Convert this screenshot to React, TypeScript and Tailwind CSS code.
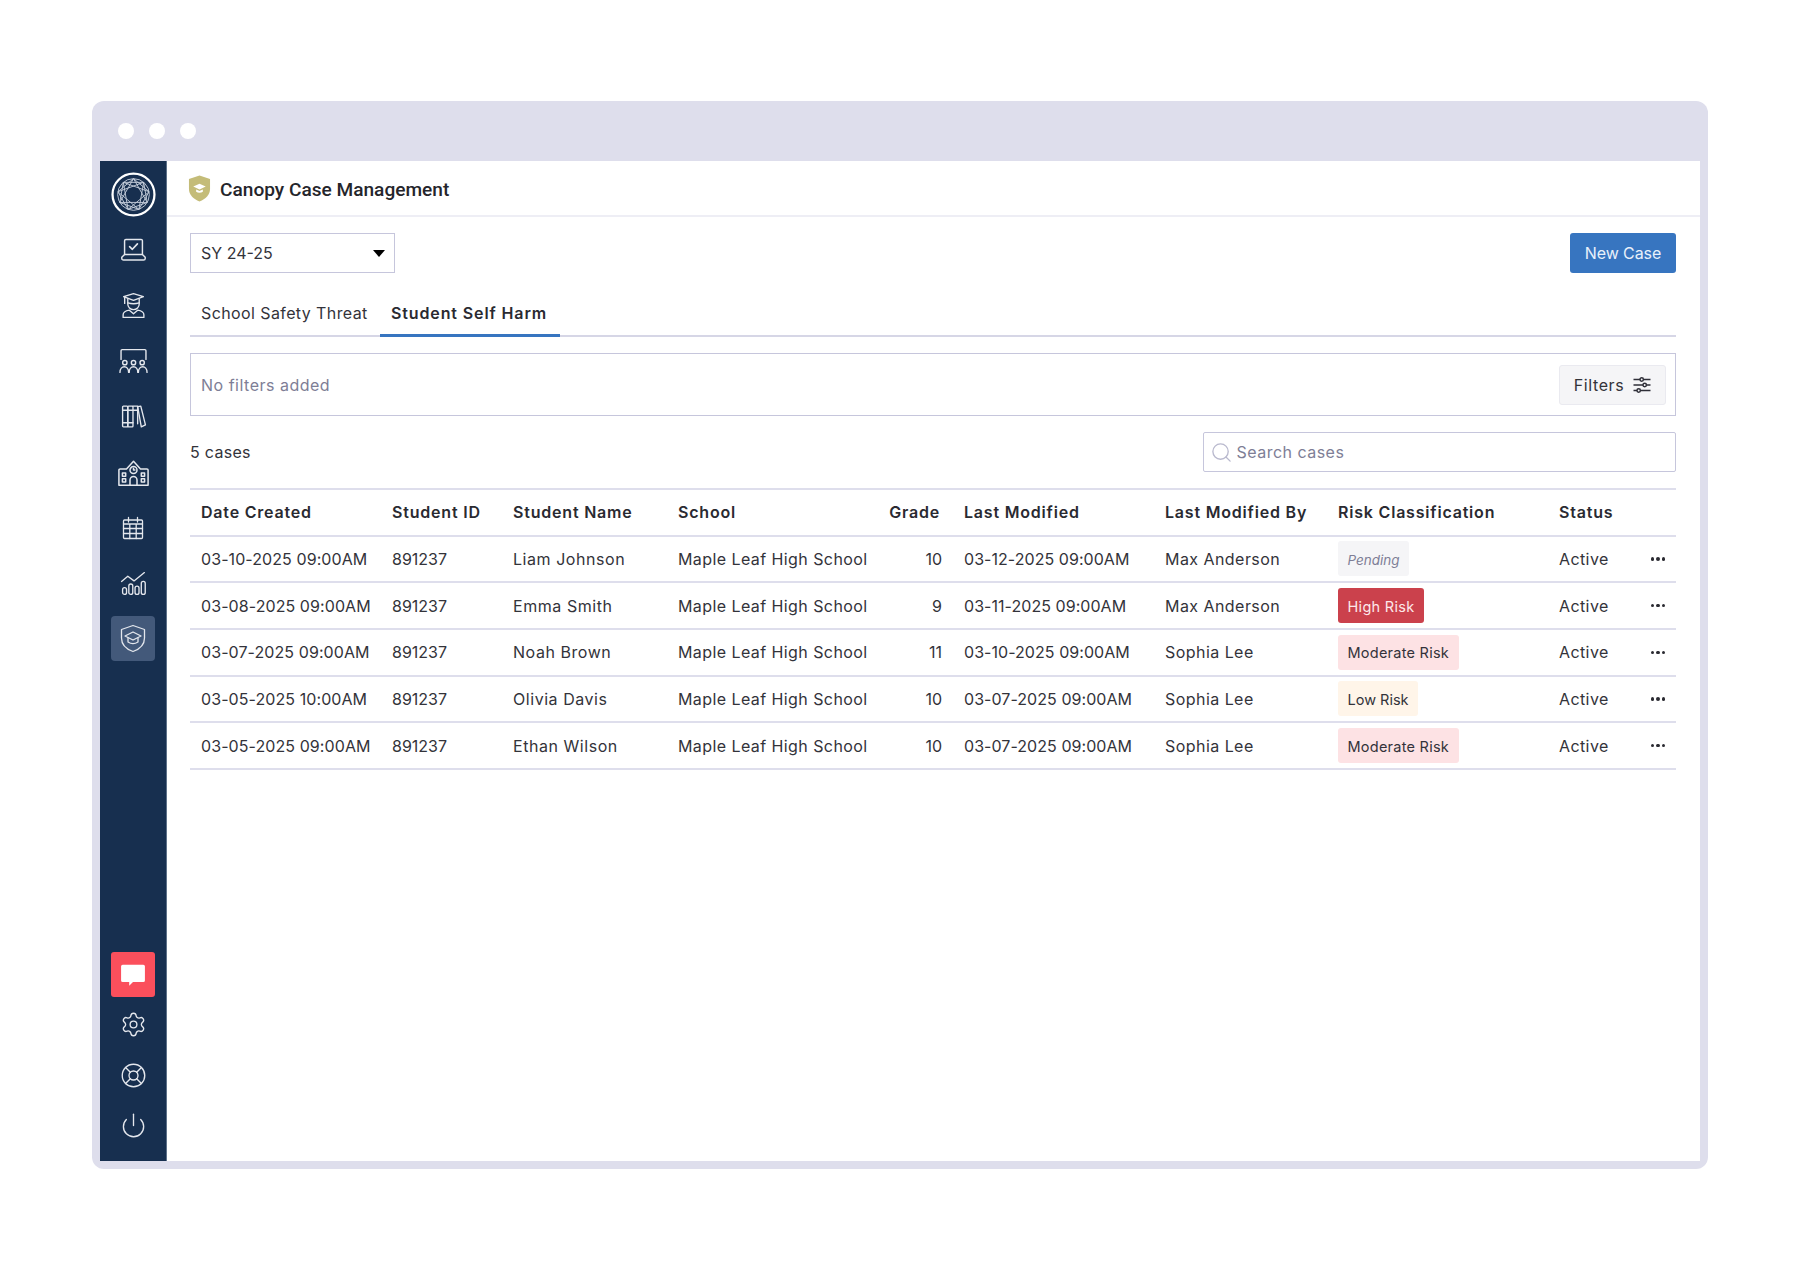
import { LifeBuoy, Power, Search, Settings } from 'lucide-react';

type IconProps = { className?: string };

const LOGO_POINTS = Array.from({ length: 9 }, (_, i) => {
  const a = (i * 40 - 90) * (Math.PI / 180);
  return [22 + 15.5 * Math.cos(a), 22 + 15.5 * Math.sin(a)];
});

const starPath = (step: number) =>
  LOGO_POINTS.map((_, i) => {
    const from = LOGO_POINTS[i];
    const to = LOGO_POINTS[(i + step) % 9];
    return `M${from[0].toFixed(2)} ${from[1].toFixed(2)}L${to[0].toFixed(2)} ${to[1].toFixed(2)}`;
  }).join('');

const LogoMark = () => (
  <svg viewBox="0 0 44 44" className="w-[45px] h-[45px]" fill="none">
    <circle cx="22" cy="22" r="20.500" stroke="#fff" strokeWidth="2.200" />
    <circle cx="22" cy="22" r="15.500" stroke="#c5cedb" strokeWidth="0.900" />
    <path d={starPath(3)} stroke="#c5cedb" strokeWidth="0.900" />
    <path d={starPath(2)} stroke="#c5cedb" strokeWidth="0.900" />
  </svg>
);

const Laptop = ({ className }: IconProps) => (
  <svg viewBox="0 0 26 24" className={className} fill="none" stroke="currentColor" strokeWidth="1.300" strokeLinejoin="round" strokeLinecap="round">
    <path d="M5 16.500V4.200A1.200 1.200 0 0 1 6.200 3h13.600A1.200 1.200 0 0 1 21 4.200v12.300" />
    <path d="M9.500 9.500l2.500 2.300 4.500-4.800" strokeWidth="1.500" />
    <path d="M5 16.500h16l2.500 2.500v1a1.500 1.500 0 0 1-1.500 1.500H4A1.500 1.500 0 0 1 2.500 20v-1z" />
  </svg>
);

const Graduate = ({ className }: IconProps) => (
  <svg viewBox="0 0 26 26" className={className} fill="none" stroke="currentColor" strokeWidth="1.300" strokeLinejoin="round" strokeLinecap="round">
    <path d="M3.500 4.500l9.500-3 9.500 3-9.500 3.500z" />
    <path d="M7.500 6.500v5a5.500 5.500 0 0 0 11 0v-5" />
    <path d="M7.500 10.500c3.500 1 7.500 1 11 0" />
    <path d="M4.500 5v6" />
    <path d="M3 24.500v-2.500c0-2.500 3-4 6-4.500l4 3.500 4-3.500c3 .5 6 2 6 4.500v2.500z" />
  </svg>
);

const Classroom = ({ className }: IconProps) => (
  <svg viewBox="0 0 28 24" className={className} fill="none" stroke="currentColor" strokeWidth="1.300" strokeLinejoin="round" strokeLinecap="round">
    <path d="M2.500 10.500V2.500a1 1 0 0 1 1-1h21a1 1 0 0 1 1 1v8" />
    <circle cx="6" cy="13.500" r="2" />
    <circle cx="14" cy="13.500" r="2" />
    <circle cx="22" cy="13.500" r="2" />
    <path d="M1.500 22.500c0-7 8-7 8 0" />
    <path d="M10 22.500c0-7 8-7 8 0" />
    <path d="M18.500 22.500c0-7 8-7 8 0" />
  </svg>
);

const Books = ({ className }: IconProps) => (
  <svg viewBox="0 0 26 24" className={className} fill="none" stroke="currentColor" strokeWidth="1.300" strokeLinejoin="round" strokeLinecap="round">
    <rect x="2.500" y="2" width="5" height="20" rx="0.800" />
    <rect x="7.500" y="2" width="5" height="20" rx="0.800" />
    <path d="M12.500 2h4.500v17" />
    <path d="M17 2.500l3-.5 4.500 18-4 2z" />
    <path d="M2.500 6h14.500M2.500 18h10" />
  </svg>
);

const School = ({ className }: IconProps) => (
  <svg viewBox="0 0 28 24" className={className} fill="none" stroke="currentColor" strokeWidth="1.300" strokeLinejoin="round" strokeLinecap="round">
    <path d="M1.500 22.500V9.500a1 1 0 0 1 1-1h5.500L14 2l6 6.500h5.500a1 1 0 0 1 1 1v13z" />
    <circle cx="14" cy="9.500" r="3" />
    <path d="M14 8v1.500h1.200" />
    <path d="M11 22.500V18a3 3 0 0 1 6 0v4.500" />
    <rect x="4.500" y="12" width="2.800" height="2.800" />
    <rect x="20.700" y="12" width="2.800" height="2.800" />
    <rect x="4.500" y="17" width="2.800" height="2.800" />
    <rect x="20.700" y="17" width="2.800" height="2.800" />
  </svg>
);

const Calendar = ({ className }: IconProps) => (
  <svg viewBox="0 0 24 24" className={className} fill="none" stroke="currentColor" strokeWidth="1.300" strokeLinejoin="round" strokeLinecap="round">
    <rect x="2.500" y="4" width="19" height="18.500" rx="1" />
    <path d="M7.500 1.500v4.500M16.500 1.500v4.500M2.500 8h19M2.500 12.500h19M2.500 17.500h19M8.800 8v14.500M15.200 8v14.500" />
  </svg>
);

const Chart = ({ className }: IconProps) => (
  <svg viewBox="0 0 26 24" className={className} fill="none" stroke="currentColor" strokeWidth="1.300" strokeLinejoin="round" strokeLinecap="round">
    <path d="M1.500 10l6-5 6 4.500 10-8" />
    <rect x="2.500" y="16" width="3.800" height="6.500" rx="1.900" />
    <rect x="8.500" y="12.500" width="3.800" height="10" rx="1.900" />
    <rect x="14.500" y="14.500" width="3.800" height="8" rx="1.900" />
    <rect x="20.500" y="10" width="3.800" height="12.500" rx="1.900" />
  </svg>
);

const ShieldCap = ({ className }: IconProps) => (
  <svg viewBox="0 0 26 28" className={className} fill="none" stroke="currentColor" strokeWidth="1.300" strokeLinejoin="round" strokeLinecap="round">
    <path d="M13 1l11.500 4v8.500c0 6.500-4.500 11-11.500 13.500C6 24.500 1.500 20 1.500 13.500V5z" />
    <path d="M5 11.500l8-4 8 4-8 4z" />
    <path d="M8 13.500v4c3 2 7 2 10 0v-4" />
  </svg>
);

const GoldShield = () => (
  <svg viewBox="0 0 24 28" className="w-[23px] h-[27px]">
    <path d="M12 0.500l11 3.700v10c0 6.300-4.500 10.800-11 13.300C5.500 25 1 20.500 1 14.200v-10z" fill="#c4bc78" />
    <path d="M5.500 12l6.500-3 6.500 3-6.500 3z" fill="#fff" />
    <path d="M8.500 15v2.300c2 1.400 5 1.400 7 0V15l-3.500 1.600z" fill="#fff" />
  </svg>
);

const Chat = ({ className }: IconProps) => (
  <svg viewBox="0 0 24 24" className={className} fill="#fff">
    <path d="M2.500 2.500h19a1.500 1.500 0 0 1 1.500 1.500v13a1.500 1.500 0 0 1-1.500 1.500H12l-3.500 3.500v-3.500h-6A1.500 1.500 0 0 1 1 17V4a1.500 1.500 0 0 1 1.500-1.500z" />
  </svg>
);

const Sliders = ({ className }: IconProps) => (
  <svg viewBox="0 0 18 18" className={className} fill="none" stroke="#2f2f38" strokeWidth="1.500">
    <path d="M0.500 3.500h6.500M10.500 3.500h7M0.500 9h9.500M13.500 9h4M0.500 14.500h3.500M7.500 14.500h10" />
    <circle cx="8.700" cy="3.500" r="1.700" />
    <circle cx="11.700" cy="9" r="1.700" />
    <circle cx="5.700" cy="14.500" r="1.700" />
  </svg>
);

const navItems = [
  { icon: Laptop, size: 'w-[29px] h-[27px]' },
  { icon: Graduate, size: 'w-[27px] h-[27px]' },
  { icon: Classroom, size: 'w-[31px] h-[26px]' },
  { icon: Books, size: 'w-[27px] h-[25px]' },
  { icon: School, size: 'w-[33px] h-[28px]' },
  { icon: Calendar, size: 'w-[24px] h-[24px]' },
  { icon: Chart, size: 'w-[27px] h-[25px]' },
];

const Sidebar = () => (
  <aside className="w-[67px] shrink-0 bg-[#172f4f] border-r border-[#5d7189] flex flex-col items-center pt-[11px] pb-[11px] text-[#e4e7ed]">
    <LogoMark />
    <div className="flex flex-col items-center mt-[5px]">
      {navItems.map(({ icon: Icon, size }, i) => (
        <div key={i} className="h-[55.700px] w-[44px] flex items-center justify-center">
          <Icon className={size} />
        </div>
      ))}
    </div>
    <div className="w-[44px] h-[45px] rounded-[4px] bg-[#43597a] flex items-center justify-center mt-[4px]">
      <ShieldCap className="w-[26px] h-[29px]" />
    </div>
    <div className="mt-auto flex flex-col items-center">
      <div className="w-[44px] h-[45px] rounded-[3px] bg-[#fb4f5c] flex items-center justify-center">
        <Chat className="w-[26px] h-[26px]" />
      </div>
      <div className="h-[50px] flex items-center mt-[2px]">
        <Settings className="w-[27px] h-[27px]" strokeWidth={1.2} />
      </div>
      <div className="h-[52px] flex items-center">
        <LifeBuoy className="w-[27px] h-[27px]" strokeWidth={1.2} />
      </div>
      <div className="h-[49px] flex items-center">
        <Power className="w-[27px] h-[27px]" strokeWidth={1.2} />
      </div>
    </div>
  </aside>
);

const columns = [
  { label: 'Date Created', width: 'w-[191px]' },
  { label: 'Student ID', width: 'w-[121px]' },
  { label: 'Student Name', width: 'w-[165px]' },
  { label: 'School', width: 'w-[210px]' },
  { label: 'Grade', width: 'w-[76px]' },
  { label: 'Last Modified', width: 'w-[201px]' },
  { label: 'Last Modified By', width: 'w-[173px]' },
  { label: 'Risk Classification', width: 'w-[221px]' },
  { label: 'Status', width: 'w-[84px]' },
  { label: '', width: 'w-[44px]' },
];

const riskStyles: Record<string, string> = {
  Pending: 'bg-[#f5f5f7] text-[#7e7e96] italic text-[13.500px]',
  'High Risk': 'bg-[#cb414c] text-[#fde8ea] tracking-[0.3px] text-[14.500px]',
  'Moderate Risk': 'bg-[#fde2e4] text-[#33333a] tracking-[0.25px] text-[14.500px]',
  'Low Risk': 'bg-[#fff5e9] text-[#33333a] text-[14.500px]',
};

const rows = [
  ['03-10-2025 09:00AM', 'Liam Johnson', '10', '03-12-2025 09:00AM', 'Max Anderson', 'Pending'],
  ['03-08-2025 09:00AM', 'Emma Smith', '9', '03-11-2025 09:00AM', 'Max Anderson', 'High Risk'],
  ['03-07-2025 09:00AM', 'Noah Brown', '11', '03-10-2025 09:00AM', 'Sophia Lee', 'Moderate Risk'],
  ['03-05-2025 10:00AM', 'Olivia Davis', '10', '03-07-2025 09:00AM', 'Sophia Lee', 'Low Risk'],
  ['03-05-2025 09:00AM', 'Ethan Wilson', '10', '03-07-2025 09:00AM', 'Sophia Lee', 'Moderate Risk'],
];

const CasesTable = () => (
  <table className="w-full table-fixed border-collapse border-t-2 border-[#dedeec] text-[16px] text-[#33333a]">
    <colgroup>
      {columns.map((c) => (
        <col key={c.label} className={c.width} />
      ))}
    </colgroup>
    <thead>
      <tr className="h-[46.670px] border-b-2 border-[#dedeec]">
        {columns.map((c) => (
          <th
            key={c.label}
            className={`font-semibold text-[#2a2a31] tracking-[0.8px] whitespace-nowrap ${c.label === 'Grade' ? 'pl-[11px] pr-[13px] text-right' : 'px-[11px] text-left'}`}
          >
            {c.label}
          </th>
        ))}
      </tr>
    </thead>
    <tbody>
      {rows.map(([created, name, grade, modified, by, risk]) => (
        <tr key={name} className="h-[46.670px] border-b-2 border-[#dedeec]">
          <td className="px-[11px] whitespace-nowrap tracking-[0.08px]">{created}</td>
          <td className="px-[11px]">891237</td>
          <td className="px-[11px] whitespace-nowrap tracking-[0.55px]">{name}</td>
          <td className="px-[11px] whitespace-nowrap tracking-[0.42px]">Maple Leaf High School</td>
          <td className="px-[11px] text-right">{grade}</td>
          <td className="px-[11px] whitespace-nowrap tracking-[0.05px]">{modified}</td>
          <td className="px-[11px] whitespace-nowrap tracking-[0.45px]">{by}</td>
          <td className="px-[11px]">
            <span className={`inline-flex items-center h-[35px] px-[9.500px] pt-[2px] rounded-[3px] whitespace-nowrap align-middle ${riskStyles[risk]}`}>
              {risk}
            </span>
          </td>
          <td className="px-[11px] tracking-[0.4px]">Active</td>
          <td className="px-[11px]">
            <div className="flex justify-end gap-[2px]">
              <span className="w-[3.500px] h-[3.500px] rounded-full bg-[#2a2a31]" />
              <span className="w-[3.500px] h-[3.500px] rounded-full bg-[#2a2a31]" />
              <span className="w-[3.500px] h-[3.500px] rounded-full bg-[#2a2a31]" />
            </div>
          </td>
        </tr>
      ))}
    </tbody>
  </table>
);

export default function App() {
  return (
    <div className="min-h-[1270px] bg-white pt-[101px] pl-[92px] font-['Inter',sans-serif]">
      <div className="w-[1616px] h-[1068px] rounded-[12px] bg-[#dedeec] px-[8px] pb-[8px] flex flex-col">
        <div className="h-[60px] shrink-0 flex items-center gap-[15px] pl-[18px]">
          <span className="w-[16px] h-[16px] rounded-full bg-white" />
          <span className="w-[16px] h-[16px] rounded-full bg-white" />
          <span className="w-[16px] h-[16px] rounded-full bg-white" />
        </div>
        <div className="flex-1 flex min-h-0 bg-white">
          <Sidebar />
          <main className="flex-1 min-w-0">
            <header className="h-[56px] border-b-2 border-[#eeeef5] flex items-center gap-[9px] pl-[21px]">
              <GoldShield />
              <h1 className="font-['Roboto',sans-serif] font-medium text-[19.100px] text-[#25252b] mt-[5px]">Canopy Case Management</h1>
            </header>
            <div className="pl-[23px] pr-[24px] pt-[16px]">
              <div className="flex justify-between">
                <div className="w-[205px] h-[40px] border-[1.500px] border-[#c6c6dc] flex items-center justify-between pl-[10px] pr-[8px] text-[16px] text-[#33333a]">
                  <span>SY 24-25</span>
                  <span className="w-0 h-0 border-x-[6px] border-x-transparent border-t-[7px] border-t-black mr-[1px]" />
                </div>
                <button className="w-[106px] h-[40px] rounded-[3px] bg-[#3775c0] text-[#e8f0fa] text-[16px] tracking-[-0.1px]">New Case</button>
              </div>
              <div className="flex border-b-2 border-[#d6d6e6] mt-[20px] h-[44px] text-[16px]">
                <div className="px-[11px] pb-[2px] w-[190px] flex items-center text-[#33333a] whitespace-nowrap tracking-[0.4px]">School Safety Threat</div>
                <div className="px-[11px] pb-[2px] w-[180px] flex items-center font-semibold text-[#2a2a31] border-b-[3px] border-[#3775c0] mb-[-2px] whitespace-nowrap tracking-[0.88px]">Student Self Harm</div>
              </div>
              <div className="mt-[16px] h-[63px] border-[1.500px] border-[#c6c6dc] flex items-center justify-between pl-[10px] pr-[9px]">
                <span className="text-[16px] text-[#7e7e96] tracking-[0.5px]">No filters added</span>
                <button className="w-[107px] h-[40px] rounded-[3px] border border-[#eaeaf0] bg-[#f5f5f7] flex items-center justify-center gap-[9px] text-[16px] text-[#33333a] tracking-[0.6px]">
                  Filters
                  <Sliders className="w-[18px] h-[18px]" />
                </button>
              </div>
              <div className="mt-[16px] flex items-center justify-between">
                <span className="text-[16px] text-[#33333a] tracking-[0.3px]">5 cases</span>
                <div className="w-[473px] h-[40px] rounded-[2px] border-[1.500px] border-[#c6c6dc] flex items-center gap-[3.500px] pl-[6px]">
                  <Search className="w-[23px] h-[23px] text-[#b9b9ce]" strokeWidth={1.4} />
                  <span className="text-[16px] text-[#7e7e96] tracking-[0.48px]">Search cases</span>
                </div>
              </div>
              <div className="mt-[16px]">
                <CasesTable />
              </div>
            </div>
          </main>
        </div>
      </div>
    </div>
  );
}
